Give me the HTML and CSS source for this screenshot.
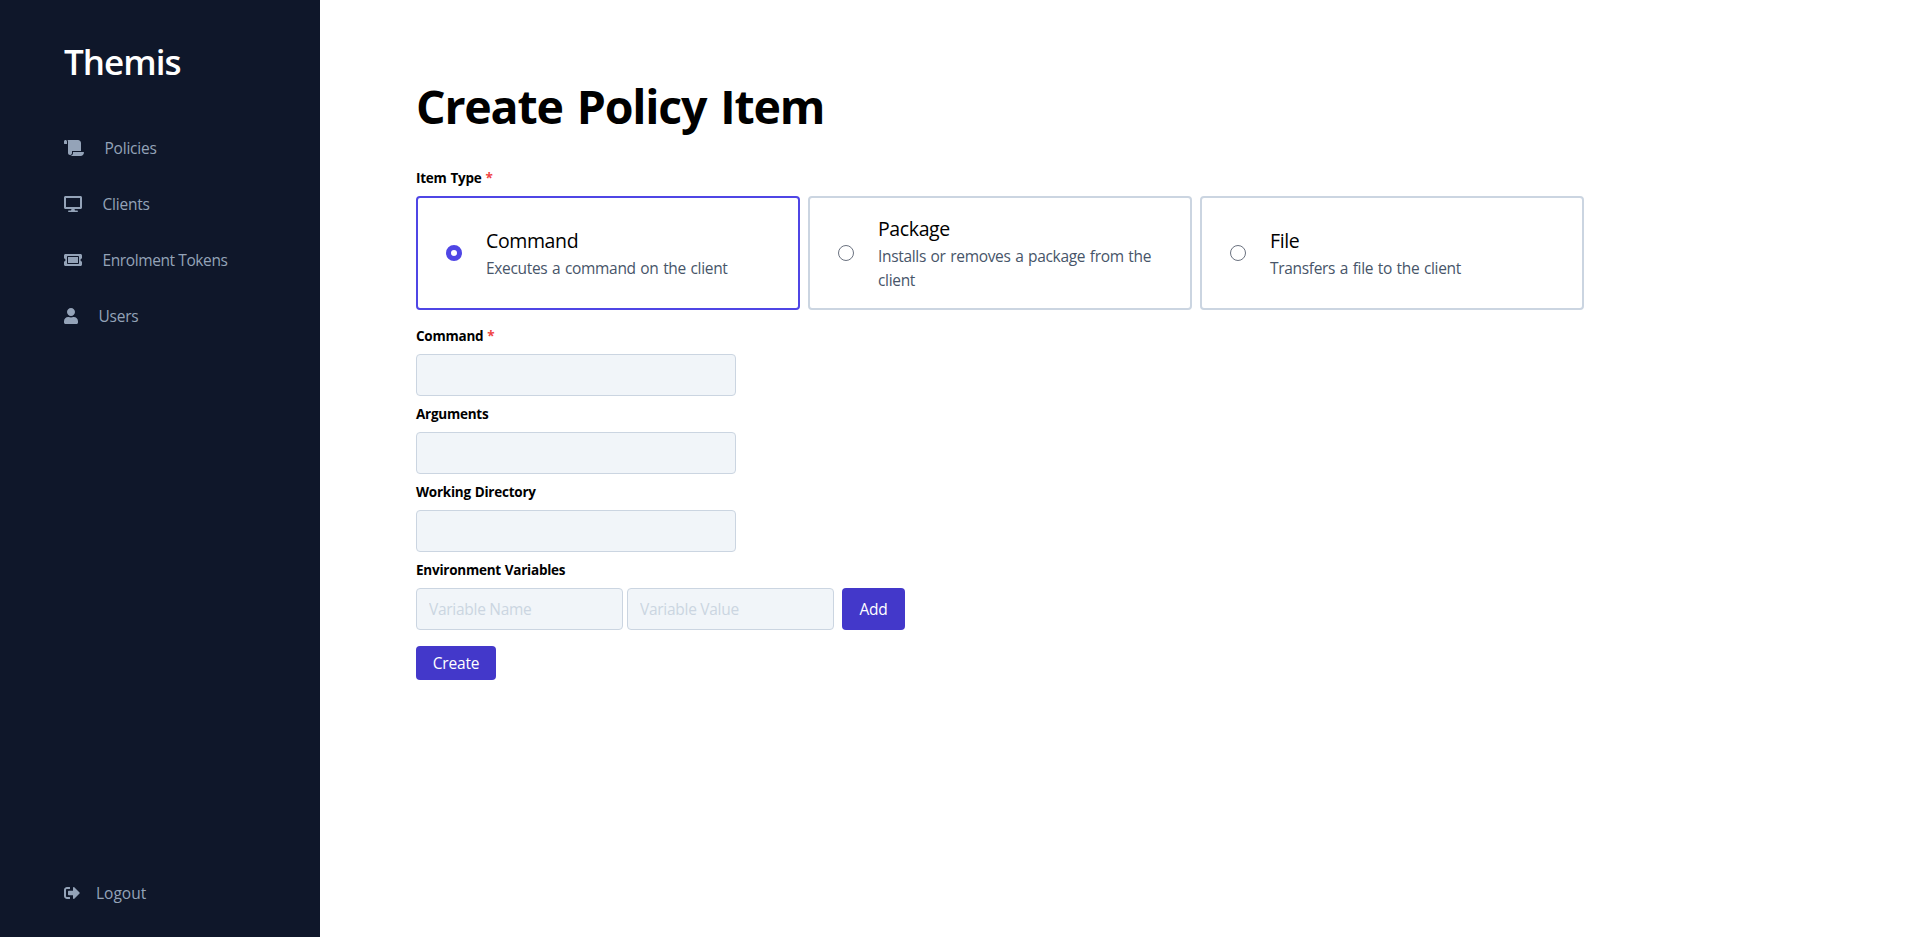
FILE: index.html
```html
<!DOCTYPE html>
<html lang="en">
<head>
<meta charset="utf-8">
<title>Themis</title>
<link rel="stylesheet" href="styles.css">
</head>
<body>
<div class="app">
  <aside class="sidebar">
    <div class="brand">Themis</div>
    <nav class="nav">
      <a class="nav-link"><svg class="icon" width="20" height="16" viewBox="0 0 640 512"><path d="M48 0C21.53 0 0 21.53 0 48v64c0 8.84 7.16 16 16 16h80V48C96 21.53 74.47 0 48 0zm208 412.57V352h288V96c0-52.94-43.06-96-96-96H111.59C121.74 13.41 128 29.92 128 48v368c0 38.87 34.65 69.65 74.75 63.12C234.22 474 256 444.46 256 412.57zM288 384v32c0 52.93-43.06 96-96 96h336c61.86 0 112-50.14 112-112 0-8.84-7.160-16-16-16H288z"/></svg><span>Policies</span></a>
      <a class="nav-link"><svg class="icon" width="18" height="16" viewBox="0 0 576 512"><path d="M528 0H48C21.5 0 0 21.5 0 48v320c0 26.500 21.500 48 48 48h192l-16 48h-72c-13.300 0-24 10.700-24 24s10.700 24 24 24h272c13.300 0 24-10.700 24-24s-10.700-24-24-24h-72l-16-48h192c26.500 0 48-21.500 48-48V48c0-26.500-21.500-48-48-48zm-16 352H64V64h448v288z"/></svg><span>Clients</span></a>
      <a class="nav-link wide"><svg class="icon" width="18" height="16" viewBox="0 0 576 512"><path d="M128 160h320v192H128V160zm400 96c0 26.510 21.490 48 48 48v96c0 26.510-21.490 48-48 48H48c-26.510 0-48-21.490-48-48v-96c26.510 0 48-21.490 48-48s-21.490-48-48-48v-96c0-26.510 21.490-48 48-48h480c26.510 0 48 21.490 48 48v96c-26.510 0-48 21.490-48 48zm-48-104c0-13.255-10.745-24-24-24H120c-13.255 0-24 10.745-24 24v208c0 13.255 10.745 24 24 24h336c13.255 0 24-10.745 24-24V152z"/></svg><span>Enrolment Tokens</span></a>
      <a class="nav-link"><svg class="icon" width="14" height="16" viewBox="0 0 448 512"><path d="M224 256c70.700 0 128-57.300 128-128S294.700 0 224 0 96 57.300 96 128s57.300 128 128 128zm89.600 32h-16.700c-22.200 10.200-46.900 16-72.900 16s-50.600-5.800-72.900-16h-16.700C60.200 288 0 348.200 0 422.400V464c0 26.500 21.500 48 48 48h352c26.500 0 48-21.500 48-48v-41.600c0-74.200-60.200-134.400-134.400-134.400z"/></svg><span>Users</span></a>
    </nav>
    <a class="nav-link logout"><svg class="icon" width="16" height="16" viewBox="0 0 512 512"><path d="M497 273L329 441c-15 15-41 4.500-41-17v-96H152c-13.300 0-24-10.700-24-24v-96c0-13.300 10.700-24 24-24h136V88c0-21.400 25.900-32 41-17l168 168c9.300 9.400 9.300 24.600 0 34zM192 436v-40c0-6.600-5.400-12-12-12H96c-17.700 0-32-14.300-32-32V160c0-17.700 14.300-32 32-32h84c6.600 0 12-5.400 12-12V76c0-6.600-5.400-12-12-12H96c-53 0-96 43-96 96v192c0 53 43 96 96 96h84c6.600 0 12-5.400 12-12z"/></svg><span>Logout</span></a>
  </aside>
  <main class="content">
    <h1 class="title">Create Policy Item</h1>
    <form class="form">
      <div class="field types">
        <div class="label">Item Type <span class="required">*</span></div>
        <div class="cards">
          <label class="card selected">
            <input class="radio" type="radio" name="type" checked>
            <span class="card-text"><span class="card-title">Command</span><span class="card-desc">Executes a command on the client</span></span>
          </label>
          <label class="card">
            <input class="radio" type="radio" name="type">
            <span class="card-text"><span class="card-title">Package</span><span class="card-desc">Installs or removes a package from the client</span></span>
          </label>
          <label class="card">
            <input class="radio" type="radio" name="type">
            <span class="card-text"><span class="card-title">File</span><span class="card-desc">Transfers a file to the client</span></span>
          </label>
        </div>
      </div>
      <div class="field">
        <label class="label" for="command">Command <span class="required">*</span></label>
        <input class="input" id="command" type="text">
      </div>
      <div class="field">
        <label class="label" for="arguments">Arguments</label>
        <input class="input" id="arguments" type="text">
      </div>
      <div class="field">
        <label class="label" for="directory">Working Directory</label>
        <input class="input" id="directory" type="text">
      </div>
      <div class="field">
        <div class="label">Environment Variables</div>
        <div class="env">
          <input class="input env-input" type="text" placeholder="Variable Name">
          <input class="input env-input" type="text" placeholder="Variable Value">
          <button class="button add" type="button">Add</button>
        </div>
      </div>
      <button class="button create" type="button">Create</button>
    </form>
  </main>
</div>
</body>
</html>
```

FILE: styles.css
```css
* { box-sizing: border-box; }
body {
  margin: 0;
  font-family: "Open Sans", "Noto Sans", sans-serif;
  font-size: 15.5px;
  line-height: 24px;
  color: #000;
  background: #fff;
}
.app { display: flex; height: 937px; }
.sidebar {
  width: 320px;
  flex: none;
  display: flex;
  flex-direction: column;
  padding: 42px 64px 32px;
  background: #0f172a;
  color: #94a3b8;
}
.brand {
  font-size: 35px;
  line-height: 40px;
  font-weight: 600;
  letter-spacing: -0.95px;
  color: #fff;
}
.nav { display: flex; flex-direction: column; gap: 32px; margin-top: 54px; }
.nav-link { display: flex; align-items: center; gap: 20.5px; height: 24px; letter-spacing: -0.22px; white-space: nowrap; }
.wide { letter-spacing: -0.4px; }
.icon { flex: none; fill: currentColor; }
.logout { gap: 16px; margin-top: auto; letter-spacing: 0; }
.content { flex: 1; padding: 78px 96px; }
.title { margin: 0; font-size: 46.5px; line-height: 56px; font-weight: 700; letter-spacing: -1.2px; word-spacing: 3.1px; white-space: nowrap; }
.form { display: flex; flex-direction: column; align-items: flex-start; margin-top: 34px; }
.field { display: flex; flex-direction: column; gap: 8px; margin-bottom: 8px; }
.types { margin-bottom: 16px; }
.label { font-size: 13.5px; line-height: 20px; font-weight: 700; letter-spacing: -0.24px; word-spacing: 0.6px; }
.required { color: #ef4444; }
.cards { display: flex; gap: 8px; }
.card {
  display: flex;
  align-items: center;
  gap: 24px;
  width: 384px;
  height: 114px;
  padding: 0 28px;
  border: 2px solid #cbd5e1;
  border-radius: 4px;
}
.card.selected { border-color: #4f46e5; }
.radio {
  appearance: none;
  flex: none;
  width: 16px;
  height: 16px;
  margin: 0;
  border: 1px solid #6b7280;
  border-radius: 50%;
  background: #fff;
}
.radio:checked { border: 5px solid #4f46e5; }
.card-text { display: flex; flex-direction: column; }
.card-title { font-size: 19.5px; line-height: 28px; letter-spacing: -0.38px; }
.card-desc { padding-top: 1px; color: #475569; letter-spacing: -0.32px; word-spacing: 0.9px; }
.input {
  width: 320px;
  height: 42px;
  padding: 8px 12px;
  border: 1px solid #cbd5e1;
  border-radius: 4px;
  background: #f1f5f9;
  font: inherit;
  letter-spacing: -0.28px;
}
.input::placeholder { color: #cbd5e1; opacity: 1; }
.env { display: flex; gap: 4px; }
.env-input { width: 207px; }
.button {
  padding: 0;
  border: 0;
  border-radius: 4px;
  background: #4338ca;
  color: #fff;
  font: inherit;
  letter-spacing: -0.2px;
}
.add { width: 63px; height: 42px; margin-left: 4px; }
.create { width: 80px; height: 34px; margin-top: 8px; }
```
